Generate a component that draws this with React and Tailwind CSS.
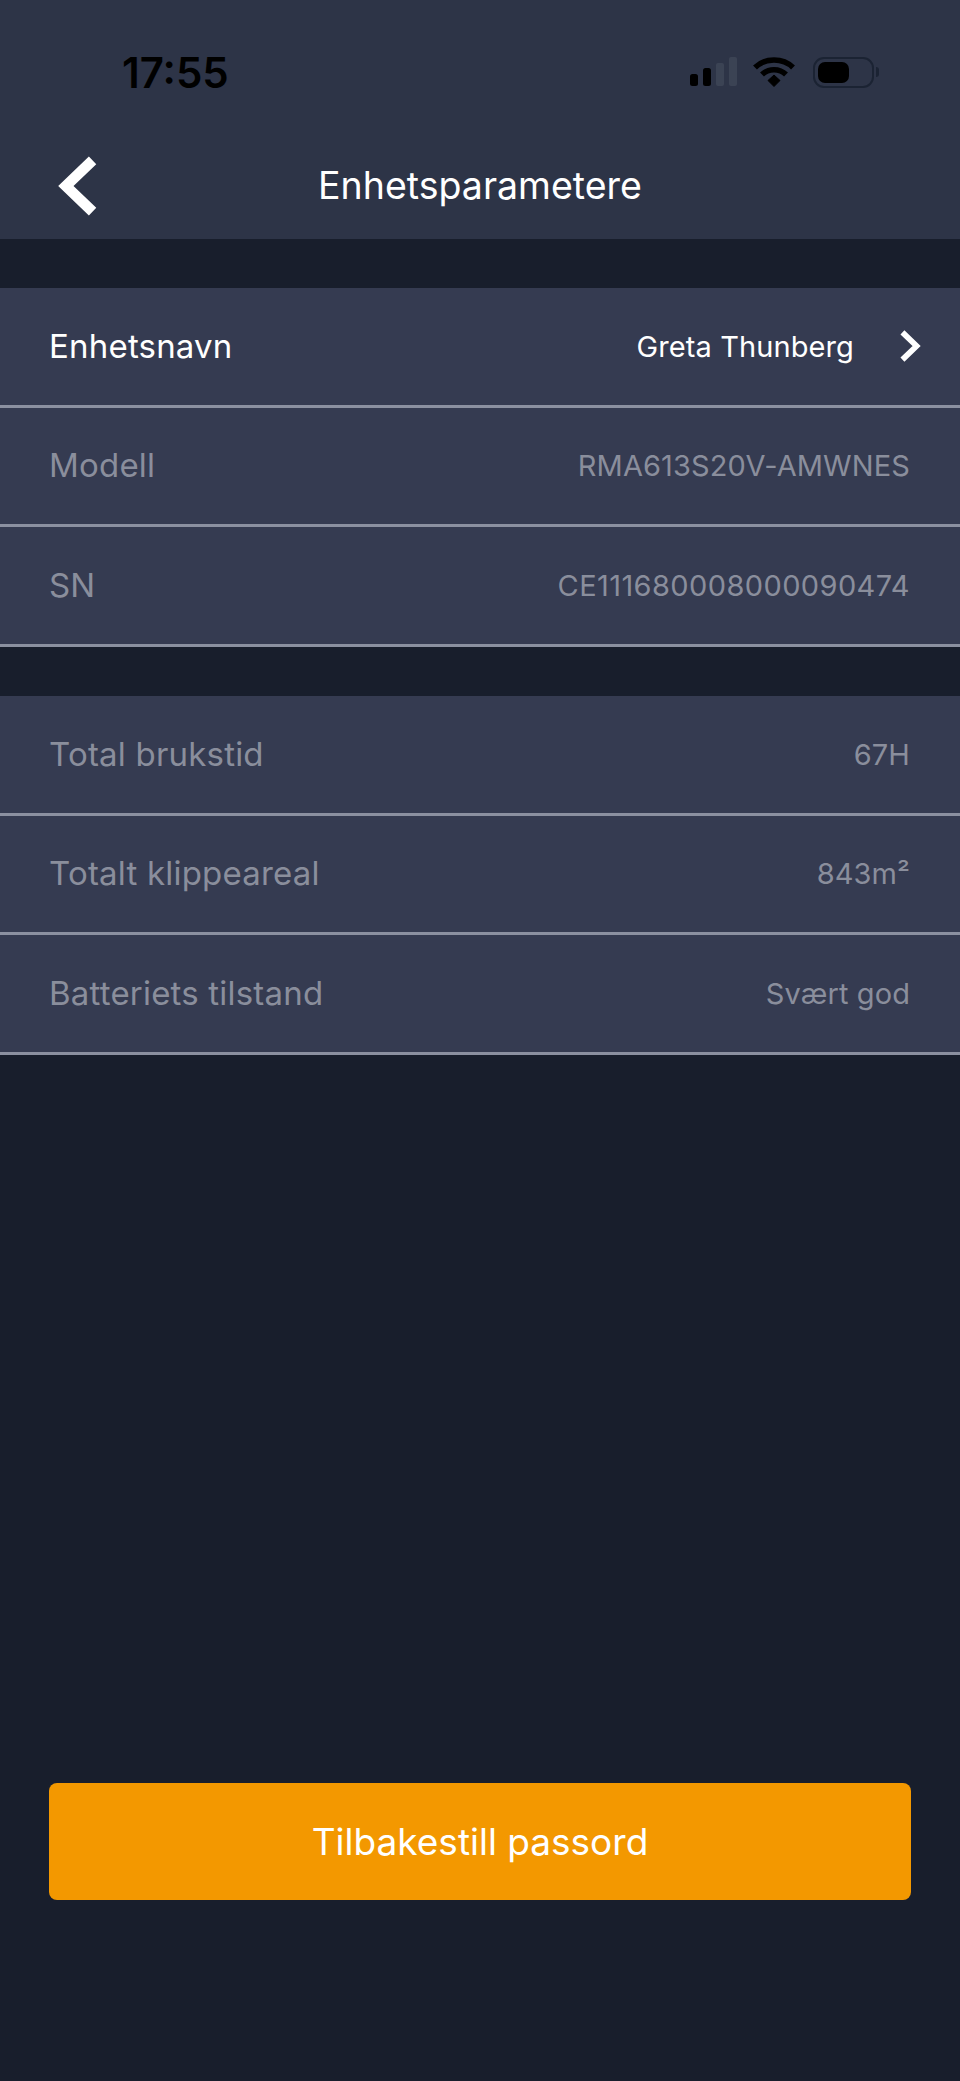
import { useMemo } from 'react'

const deviceRows = [
  { label: 'Enhetsnavn', value: 'Greta Thunberg', active: true },
  { label: 'Modell', value: 'RMA613S20V-AMWNES' },
  { label: 'SN', value: 'CE111680008000090474', wide: true },
]

const usageRows = [
  { label: 'Total brukstid', value: '67H' },
  { label: 'Totalt klippeareal', value: '843m²' },
  { label: 'Batteriets tilstand', value: 'Svært god' },
]

function Chevron({ left, className }) {
  return (
    <svg viewBox="0 0 40 60" className={className} fill="none" stroke="#fff" strokeWidth="10" strokeLinecap="butt" strokeLinejoin="miter">
      <path d={left ? 'M36 6 L11 30 L36 54' : 'M4 6 L29 30 L4 54'} />
    </svg>
  )
}

function StatusIcons() {
  return (
    <div className="flex items-center">
      <svg width="49" height="32" viewBox="0 0 49 32" className="mr-[15px]">
        <rect x="1" y="18" width="8" height="12" rx="2.5" fill="#000" />
        <rect x="14" y="12" width="8" height="18" rx="2.5" fill="#000" />
        <rect x="27" y="7" width="8" height="23" rx="2" fill="#3b4354" />
        <rect x="40" y="1" width="8" height="29" rx="2" fill="#3b4354" />
      </svg>
      <svg width="42" height="32" viewBox="0 0 42 32" className="mr-[18px]" fill="none" stroke="#000" strokeWidth="5.5">
        <path d="M2 11.5 C12 1.5 30 1.5 40 11.5" />
        <path d="M9 18.5 C15.5 12 26.5 12 33 18.5" />
        <path d="M15 24.5 L21 19 L27 24.5 L21 30.5 Z" fill="#000" strokeWidth="1" />
      </svg>
      <div className="flex items-center">
        <div className="flex h-[31px] w-[61px] items-center rounded-[11px] border-2 border-[#1b2333] p-[3px]">
          <div className="h-full w-[31px] rounded-[7px] bg-black" />
        </div>
        <div className="ml-[2px] h-[10px] w-[3px] rounded-r-full bg-[#1b2333]" />
      </div>
    </div>
  )
}

function Row({ label, value, active, wide }) {
  return (
    <div className="flex h-[119.7px] items-center justify-between border-b-[3px] border-[#8b90a0] bg-[#353b51] pl-[49px] pr-[50px]">
      <span className={`text-[33px] tracking-[0.2px] ${active ? 'text-white' : 'text-[#8a8e9c]'}`}>{label}</span>
      {active ? (
        <div className="flex items-center">
          <span className="text-[29px] tracking-[0.1px] text-white">{value}</span>
          <Chevron className="ml-[46px] mr-[-13px] h-[34px] w-[23px]" />
        </div>
      ) : (
        <span className={`text-[29px] text-[#8a8e9c] ${wide ? 'tracking-[0.4px]' : 'tracking-[0.1px]'}`}>{value}</span>
      )}
    </div>
  )
}

export default function App() {
  const groups = useMemo(() => [deviceRows, usageRows], [])

  return (
    <div className="flex h-[2081px] w-[960px] flex-col overflow-hidden bg-[#181e2c] font-['Inter',sans-serif]">
      <header className="h-[239px] shrink-0 bg-[#2d3447]">
        <div className="flex h-[143px] items-center justify-between pl-[122px] pr-[81px] pt-[1px]">
          <span className="text-[42px] font-semibold text-black">17:55</span>
          <StatusIcons />
        </div>
        <div className="relative flex h-[96px] items-start justify-center">
          <button className="absolute left-[54px] top-[11px]">
            <Chevron left className="h-[64px] w-[43px]" />
          </button>
          <h1 className="mt-[21px] text-[37.5px] font-normal leading-[44px] text-white">Enhetsparametere</h1>
        </div>
      </header>

      <main className="flex flex-1 flex-col">
        {groups.map((rows, i) => (
          <section key={i} className="mt-[49px]">
            {rows.map((r) => (
              <Row key={r.label} {...r} />
            ))}
          </section>
        ))}

        <div className="mt-auto px-[49px] pb-[181px]">
          <button className="flex h-[117px] w-full items-center justify-center rounded-[8px] bg-[#f39800] text-[37px] text-white">
            Tilbakestill passord
          </button>
        </div>
      </main>
    </div>
  )
}
